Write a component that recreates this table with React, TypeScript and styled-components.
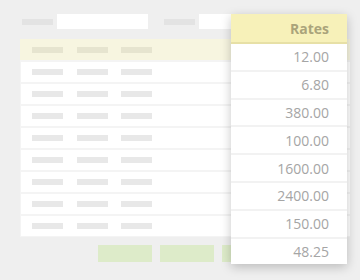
import React from 'react';
import styled, { createGlobalStyle } from 'styled-components';

const GlobalStyle = createGlobalStyle`
  html, body {
    margin: 0;
    padding: 0;
    background: #efefef;
    font-family: "Open Sans", "Liberation Sans", sans-serif;
  }
`

const Page = styled.div`
  position: relative;
  width: 360px;
  height: 280px;
  overflow: hidden;
  background: #efefef;
`

const Toolbar = styled.div`
  display: flex;
  align-items: center;
  height: 15px;
  padding: 14px 0 0 22px;
`

const Label = styled.div<{ $gap?: number }>`
  width: 31px;
  height: 6px;
  margin-left: ${p => p.$gap || 0}px;
  margin-right: 4px;
  background: #e3e3e3;
`

const Input = styled.div<{ $w: number }>`
  width: ${p => p.$w}px;
  height: 15px;
  background: #fff;
`

const Table = styled.div`
  display: flex;
  flex-direction: column;
  gap: 2px;
  width: 330px;
  margin: 10px 0 0 20px;
  padding-bottom: 1px;
  background: #f4f4f4;
`

const Row = styled.div<{ $head?: boolean }>`
  display: grid;
  grid-template-columns: 45px 44px 31px;
  align-items: center;
  height: ${p => (p.$head ? 21 : 20)}px;
  margin-left: ${p => (p.$head ? 0 : 1)}px;
  padding-left: ${p => (p.$head ? 12 : 11)}px;
  background: ${p => (p.$head ? '#f7f5e0' : '#fff')};
`

const Cell = styled.div<{ $head?: boolean }>`
  width: 31px;
  height: 6px;
  background: ${p => (p.$head ? '#e6e4cf' : '#e8e8e8')};
`

const Buttons = styled.div`
  display: flex;
  gap: 8px;
  margin: 8px 0 0 98px;
`

const Button = styled.div`
  width: 54px;
  height: 17px;
  background: #ddebc9;
`

const Panel = styled.div`
  position: absolute;
  left: 231px;
  top: 14px;
  width: 116px;
  background: #fff;
  box-shadow: 0 3px 10px rgba(0, 0, 0, 0.22);
`

const PanelHead = styled.div`
  height: 28px;
  padding-right: 18px;
  display: flex;
  align-items: center;
  justify-content: flex-end;
  background: #f7f1b9;
  border-bottom: 2px solid #e7e0a6;
  color: #aaa47b;
  font-size: 14px;
  font-weight: 700;
`

const Rate = styled.div`
  height: 25.8px;
  padding-right: 18px;
  display: flex;
  align-items: center;
  justify-content: flex-end;
  color: #a5a5a5;
  font-size: 14px;
  & + & {
    border-top: 2px solid #f2f2f2;
  }
`

const rates = ['12.00', '6.80', '380.00', '100.00', '1600.00', '2400.00', '150.00', '48.25']

const App: React.FC = () => {
  return (
    <Page>
      <GlobalStyle />
      <Toolbar>
        <Label />
        <Input $w={91} />
        <Label $gap={16} />
        <Input $w={120} />
      </Toolbar>
      <Table>
        <Row $head>
          <Cell $head /><Cell $head /><Cell $head />
        </Row>
        {Array.from({ length: 8 }).map((_, i) => (
          <Row key={i}>
            <Cell /><Cell /><Cell />
          </Row>
        ))}
      </Table>
      <Buttons>
        <Button />
        <Button />
        <Button />
      </Buttons>
      <Panel>
        <PanelHead>Rates</PanelHead>
        {rates.map(r => (
          <Rate key={r}>{r}</Rate>
        ))}
      </Panel>
    </Page>
  )
}

export default App
